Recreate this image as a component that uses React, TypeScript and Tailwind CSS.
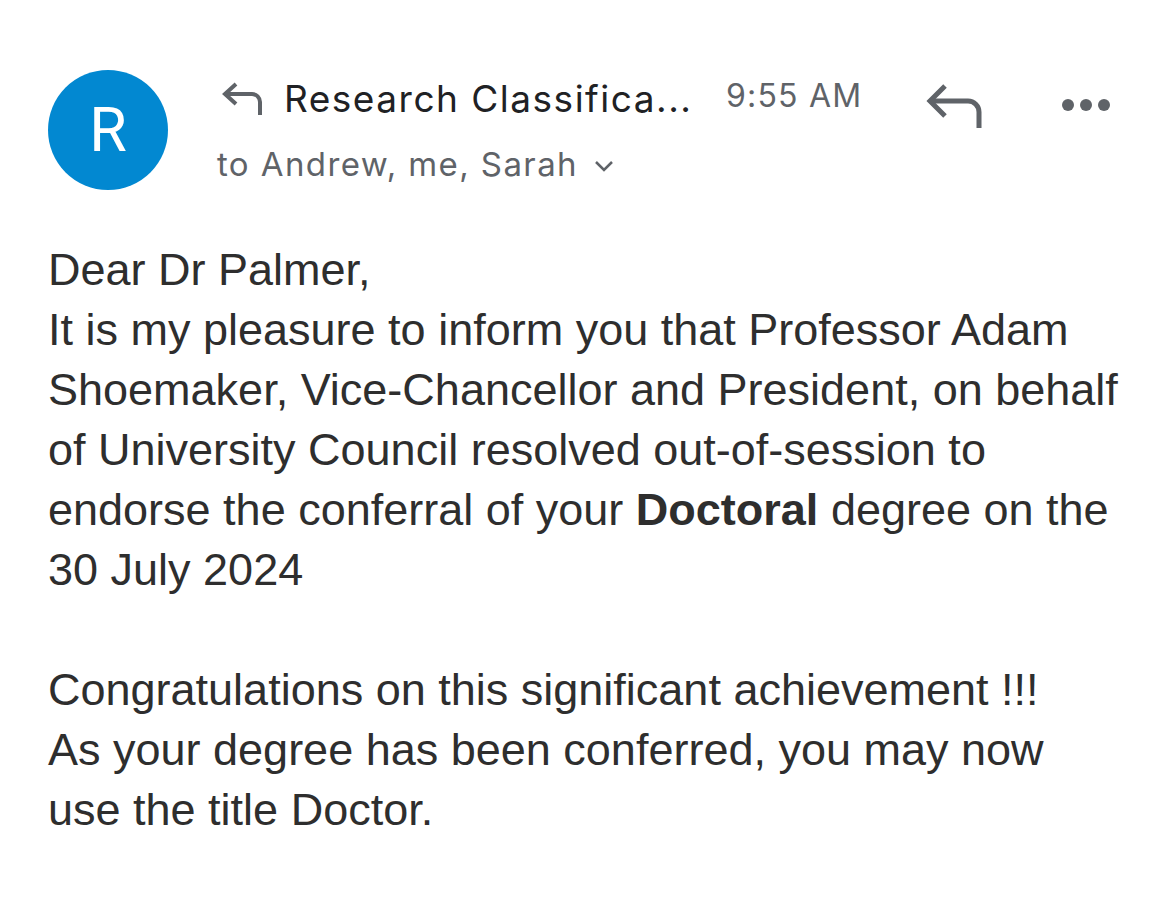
export default function App() {
  return (
    <div className="w-[1170px] h-[897px] bg-white overflow-hidden">
      {/* header */}
      <div className="flex items-start pl-[48px] pr-[60px] pt-[70px]">
        <div className="w-[120px] h-[120px] rounded-full bg-[#0288d1] flex items-center justify-center shrink-0">
          <span className="text-white text-[61px] font-['Roboto',sans-serif] leading-none">R</span>
        </div>
        <div className="flex flex-col ml-[54px] pt-[6px]">
          <div className="flex items-center h-[44px]">
            <svg width="42" height="34" viewBox="0 0 42 34" fill="none" stroke="#5f6368" strokeWidth="4" className="mr-[20px]">
              <path d="M14 3 L3 13 L14 23" />
              <path d="M3 13 H30 a8 8 0 0 1 8 8 V34" />
            </svg>
            <span className="font-['Inter',sans-serif] text-[37px] text-[#202124] w-[442px] leading-none tracking-[1.5px]">
              Research Classifica...
            </span>
            <span className="font-['Inter',sans-serif] text-[32px] text-[#5f6368] leading-none -mt-[4px] tracking-[1.2px]">
              9:55 AM
            </span>
          </div>
          <div className="flex items-center mt-[28px] -ml-[5px]">
            <span className="font-['Inter',sans-serif] text-[33px] text-[#5f6368] leading-none tracking-[1.4px]">
              to Andrew, me, Sarah
            </span>
            <svg width="20" height="12" viewBox="0 0 20 12" fill="none" stroke="#5f6368" strokeWidth="2.5" className="ml-[16px] mt-[2px]">
              <path d="M2 2 L10 10 L18 2" />
            </svg>
          </div>
        </div>
        <div className="flex items-center ml-auto pt-[14px] gap-[78px]">
          <svg width="58" height="44" viewBox="0 0 58 44" fill="none" stroke="#5f6368" strokeWidth="5">
            <path d="M19 2 L4 17 L19 32" />
            <path d="M4 17 H42 a11 11 0 0 1 11 11 V44" />
          </svg>
          <div className="flex gap-[6px] -mt-[2px]">
            <span className="w-[12px] h-[12px] rounded-full bg-[#5f6368]" />
            <span className="w-[12px] h-[12px] rounded-full bg-[#5f6368]" />
            <span className="w-[12px] h-[12px] rounded-full bg-[#5f6368]" />
          </div>
        </div>
      </div>

      {/* body */}
      <div className="pl-[48px] pr-[44px] pt-[50px] font-['Liberation_Sans',Arial,sans-serif] text-[45px] leading-[60px] text-[#2e2e2e]">
        <p>Dear Dr Palmer,</p>
        <p>
          It is my pleasure to inform you that Professor Adam Shoemaker, Vice-Chancellor and President, on behalf
          of University Council resolved out-of-session to endorse the conferral of your <b>Doctoral</b> degree on the
          30 July 2024
        </p>
        <p>&nbsp;</p>
        <p>Congratulations on this significant achievement !!!</p>
        <p>As your degree has been conferred, you may now use the title Doctor.</p>
      </div>
    </div>
  );
}
